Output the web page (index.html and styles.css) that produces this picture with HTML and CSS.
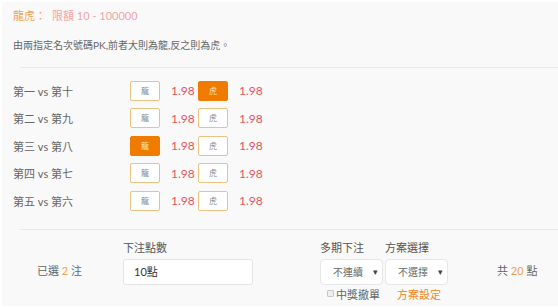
FILE: index.html
```html
<!DOCTYPE html>
<html lang="zh-Hant">
<head>
<meta charset="utf-8">
<link rel="stylesheet" href="styles.css">
</head>
<body>
<div class="panel">
  <div class="head">
    <div class="title"><span class="t-name">龍虎：</span><span class="t-limit">限額 10 - 100000</span></div>
    <div class="desc">由兩指定名次號碼PK,前者大則為龍,反之則為虎。</div>
  </div>
  <div class="rows">
    <div class="row"><span class="label">第一 vs 第十</span><span class="box">龍</span><span class="odds">1.98</span><span class="box on">虎</span><span class="odds">1.98</span></div>
    <div class="row"><span class="label">第二 vs 第九</span><span class="box">龍</span><span class="odds">1.98</span><span class="box">虎</span><span class="odds">1.98</span></div>
    <div class="row"><span class="label">第三 vs 第八</span><span class="box on">龍</span><span class="odds">1.98</span><span class="box">虎</span><span class="odds">1.98</span></div>
    <div class="row"><span class="label">第四 vs 第七</span><span class="box">龍</span><span class="odds">1.98</span><span class="box">虎</span><span class="odds">1.98</span></div>
    <div class="row"><span class="label">第五 vs 第六</span><span class="box">龍</span><span class="odds">1.98</span><span class="box">虎</span><span class="odds">1.98</span></div>
  </div>
  <div class="foot">
    <div class="picked">已選 <span class="hl">2</span> 注</div>
    <div class="amount">
      <div class="flabel">下注點數</div>
      <div class="input">10點</div>
    </div>
    <div class="plans">
      <div class="plan-labels"><span class="flabel w63">多期下注</span><span class="flabel">方案選擇</span></div>
      <div class="selects">
        <div class="select"><span>不連續</span><span class="arrow">▾</span></div>
        <div class="select"><span>不選擇</span><span class="arrow">▾</span></div>
      </div>
      <div class="under">
        <span class="chk"><span class="cb"></span>中獎撤單</span>
        <span class="setting">方案設定</span>
      </div>
    </div>
    <div class="total">共 <span class="hl">20</span> 點</div>
  </div>
</div>
</body>
</html>
```
FILE: styles.css
```css
html, body {
  margin: 0;
  padding: 0;
  background: #ffffff;
}
body {
  font-family: Lato, "Noto Sans CJK TC", sans-serif;
  color: #666;
}
.panel {
  margin: 2px 0 1px 2px;
  height: 304px;
  background: #f9f9f9;
  overflow: hidden;
}
.head {
  padding: 4px 0 0 11px;
}
.title {
  height: 20px;
  line-height: 20px;
  font-size: 11px;
}
.t-name { color: #f2a04e; margin-right: 6px; }
.t-limit { color: #f5a2a6; }
.desc {
  margin-top: 9px;
  height: 20px;
  line-height: 20px;
  font-size: 10px;
  color: #666;
}
.rows {
  margin: 12px 0 0 18px;
  border-top: 1px solid #e9e9e9;
  padding: 9.3px 0 14.7px 0;
}
.row {
  display: flex;
  align-items: center;
  height: 27.4px;
  margin-left: -18px;
}
.label {
  width: 117px;
  padding-left: 11px;
  font-size: 11px;
  color: #666;
}
.box {
  width: 28px;
  height: 18px;
  border: 1px solid #ecc27f;
  border-radius: 2px;
  background: #fff;
  font-size: 8px;
  line-height: 18px;
  text-align: center;
  color: #888;
}
.box.on {
  background: #ef7c00;
  border-color: #ef7c00;
  color: #fde2c0;
}
.odds {
  width: 27px;
  padding-left: 11px;
  font-size: 12px;
  color: #e8525c;
}
.foot {
  margin-left: 18px;
  border-top: 1px solid #e9e9e9;
  display: flex;
  align-items: flex-start;
}
.picked {
  margin-left: -18px;
  width: 86px;
  padding: 33px 0 0 35px;
  font-size: 11px;
  line-height: 16px;
  color: #666;
}
.hl { color: #f2a04e; }
.flabel {
  display: inline-block;
  font-size: 11px;
  line-height: 16px;
  color: #555;
}
.amount {
  width: 130px;
  padding-top: 10px;
}
.amount .flabel { display: block; margin-bottom: 3px; }
.input {
  box-sizing: border-box;
  height: 26px;
  background: #fff;
  border: 1px solid #e3e3e3;
  border-radius: 3px;
  padding-left: 10px;
  font-size: 11px;
  line-height: 24px;
  color: #333;
}
.plans {
  margin-left: 67px;
  width: 129px;
  padding-top: 10px;
}
.plan-labels {
  display: flex;
  margin-bottom: 3px;
}
.w63 { width: 65px; }
.selects {
  display: flex;
  gap: 2px;
}
.select {
  box-sizing: border-box;
  width: 63px;
  height: 26px;
  background: #fff;
  border: 1px solid #e6e6e6;
  border-radius: 4px;
  display: flex;
  align-items: center;
  justify-content: space-between;
  padding: 0 4px 0 12px;
  font-size: 10px;
  color: #666;
}
.arrow {
  font-size: 9px;
  color: #444;
}
.under {
  display: flex;
  align-items: center;
  height: 16px;
  margin-top: 1px;
}
.chk {
  display: flex;
  align-items: center;
  margin-left: 7px;
  width: 70px;
  font-size: 11px;
  color: #666;
}
.cb {
  box-sizing: border-box;
  width: 7px;
  height: 7px;
  border: 1px solid #c8c8c8;
  border-radius: 1px;
  background: #eee;
  margin-right: 2px;
}
.setting {
  font-size: 11px;
  color: #f0861c;
}
.total {
  margin-left: 48px;
  padding-top: 33px;
  font-size: 11px;
  line-height: 16px;
  color: #666;
}
```
